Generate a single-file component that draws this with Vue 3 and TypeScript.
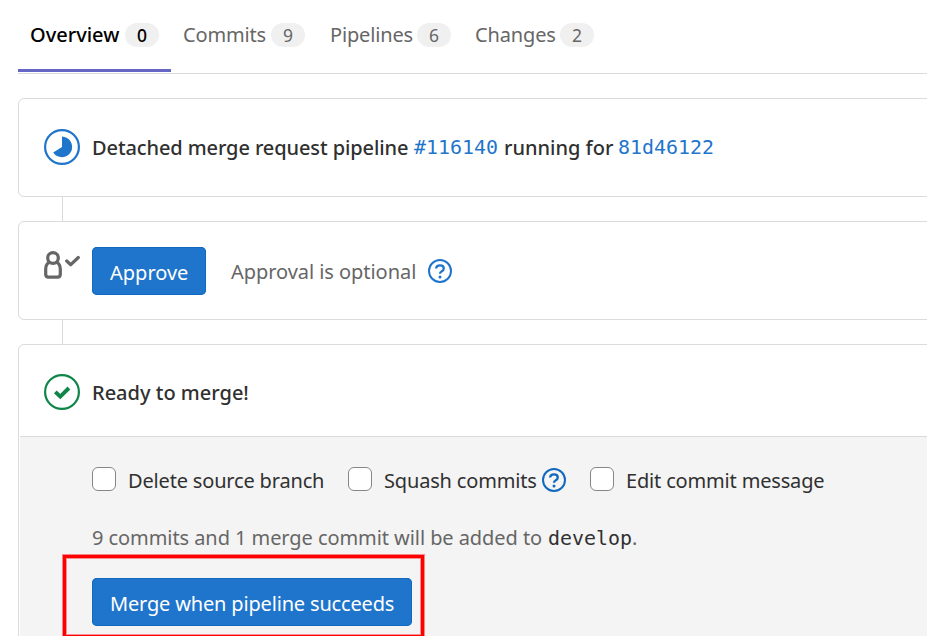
<script setup lang="ts">
interface Tab {
  key: string
  label: string
  count: number
}

interface MergeOption {
  key: string
  label: string
  help?: boolean
}

const tabs: Tab[] = [
  { key: 'overview', label: 'Overview', count: 0 },
  { key: 'commits', label: 'Commits', count: 9 },
  { key: 'pipelines', label: 'Pipelines', count: 6 },
  { key: 'changes', label: 'Changes', count: 2 },
]

const options: MergeOption[] = [
  { key: 'delete', label: 'Delete source branch' },
  { key: 'squash', label: 'Squash commits', help: true },
  { key: 'edit', label: 'Edit commit message' },
]
</script>

<template>
  <main class="page">
    <nav class="tabs">
      <a v-for="tab in tabs" :key="tab.key" class="tab" :class="[tab.key, { active: tab.key === 'overview' }]">
        <span class="tab-label">{{ tab.label }}</span>
        <span class="badge">{{ tab.count }}</span>
      </a>
    </nav>

    <section class="card row">
      <svg class="status running" viewBox="0 0 36 36">
        <circle cx="18" cy="18" r="16.9" fill="none" stroke="#1f75cb" stroke-width="2.2" />
        <path d="M18 7.6A10.3 10.3 0 1 1 9.2 23.5L18 18Z" fill="#1f75cb" />
      </svg>
      <p class="title">
        <span class="t-pipeline">Detached merge request pipeline</span>
        <a class="mono link first">#116140</a>
        <span class="t-running">running for</span>
        <a class="mono link">81d46122</a>
      </p>
    </section>
    <div class="connector"></div>

    <section class="card row">
      <svg class="status approval" viewBox="0 0 36 36" fill="none" stroke="#666" stroke-width="3.2" stroke-linejoin="round">
        <circle cx="9" cy="10" r="5.3" />
        <path d="M5.3 14.4C3 15.6 1.7 18 1.7 21V26.2Q1.7 29.2 4.7 29.2H13.3Q16.3 29.2 16.3 26.2V21C16.3 18 15 15.6 12.7 14.4" />
        <path d="M22.7 13L26.8 16.7L34.3 9.5" stroke-linecap="round" />
      </svg>
      <button class="btn approve"><span>Approve</span></button>
      <span class="optional">Approval is optional</span>
      <svg class="help" viewBox="0 0 24 24" fill="none" stroke="#1f75cb">
        <circle cx="12" cy="12" r="11" stroke-width="2" />
        <path d="M8.1 9.5C8.3 7.4 10 6.4 12 6.4C14.3 6.4 15.8 7.6 15.8 9.5C15.8 11.2 14.6 11.9 13.5 12.5C12.4 13.1 12 13.4 12 14.7" stroke-width="2.3" />
        <circle cx="12" cy="17.9" r="1.5" fill="#1f75cb" stroke="none" />
      </svg>
    </section>
    <div class="connector"></div>

    <section class="card merge">
      <div class="row ready">
        <svg class="status" viewBox="0 0 36 36" fill="none" stroke="#108548">
          <circle cx="18" cy="18" r="16.9" stroke-width="2.2" />
          <path d="M11.3 17.8L16.3 22.6L24.9 14" stroke-width="3.9" />
        </svg>
        <p class="title"><span class="t-ready">Ready to merge!</span></p>
      </div>
      <div class="panel">
        <div class="options">
          <label v-for="option in options" :key="option.key" class="option" :class="option.key">
            <input type="checkbox" class="box" />
            <span class="option-label">{{ option.label }}</span>
            <svg v-if="option.help" class="help" viewBox="0 0 24 24" fill="none" stroke="#1068bf">
              <circle cx="12" cy="12" r="11" stroke-width="2" />
              <path d="M8.1 9.5C8.3 7.4 10 6.4 12 6.4C14.3 6.4 15.8 7.6 15.8 9.5C15.8 11.2 14.6 11.9 13.5 12.5C12.4 13.1 12 13.4 12 14.7" stroke-width="2.3" />
              <circle cx="12" cy="17.9" r="1.5" fill="#1068bf" stroke="none" />
            </svg>
          </label>
        </div>
        <p class="summary">
          <span class="t-summary">9 commits and 1 merge commit will be added to</span>
          <span class="mono branch">develop</span><span>.</span>
        </p>
        <div class="action">
          <button class="btn submit"><span>Merge when pipeline succeeds</span></button>
          <div class="highlight"></div>
        </div>
      </div>
    </section>
  </main>
</template>

<style>
body {
  margin: 0;
  background: #fff;
  overflow: hidden;
}
</style>

<style scoped>
.page {
  box-sizing: border-box;
  width: 927px;
  height: 636px;
  padding-left: 18px;
  overflow: hidden;
  font-family: "Noto Sans", "Open Sans", sans-serif;
  font-size: 20px;
  line-height: 28px;
  color: #303030;
  white-space: nowrap;
}
p {
  margin: 0;
}
.tabs {
  display: flex;
  box-sizing: border-box;
  height: 74px;
  border-bottom: 1px solid #dbdbdb;
  margin-bottom: 24px;
}
.tab {
  display: flex;
  justify-content: space-between;
  box-sizing: border-box;
  height: 72px;
  width: 146px;
  padding: 21px 12px 0;
  color: #666;
}
.tab-label {
  letter-spacing: -0.15px;
}
.tab.overview {
  width: 153px;
}
.tab.overview .tab-label {
  letter-spacing: 0;
}
.tab.pipelines {
  padding-left: 13px;
}
.tab.changes {
  width: 143px;
}
.tab.active {
  color: #000;
  font-weight: 500;
  border-bottom: 3px solid #6666c4;
}
.badge {
  width: 34px;
  height: 24px;
  margin-top: 2px;
  border-radius: 12px;
  background: #f0f0f0;
  font-size: 17.5px;
  line-height: 24px;
  text-align: center;
}
.card {
  box-sizing: border-box;
  width: 940px;
  height: 99px;
  border: 1px solid #dbdbdb;
  border-radius: 6px;
}
.row {
  display: flex;
  align-items: center;
  padding-left: 25px;
}
.connector {
  height: 24px;
  margin-left: 44px;
  border-left: 1px solid #dbdbdb;
}
.status {
  flex: none;
  width: 36px;
  height: 36px;
  margin-right: 12px;
}
.running {
  margin-top: -1px;
}
.approval {
  margin-top: -9px;
}
.title {
  display: flex;
  align-items: center;
  font-weight: 500;
}
.t-pipeline {
  width: 322px;
  letter-spacing: -0.1px;
}
.t-running {
  width: 114px;
}
.mono {
  font-family: "DejaVu Sans Mono", monospace;
  font-size: 19.93px;
  font-weight: 400;
}
.link {
  color: #1f75cb;
}
.first {
  width: 90px;
}
.btn {
  box-sizing: border-box;
  height: 48px;
  padding: 4px 0 0 18px;
  border: 0;
  border-radius: 5px;
  background: #1f75cb;
  box-shadow: inset 0 0 0 1px #1068bf;
  color: #fff;
  font: inherit;
  text-align: left;
}
.approve {
  width: 114px;
  margin-right: 25px;
}
.optional {
  width: 197px;
  padding-top: 2px;
  color: #666;
  letter-spacing: -0.05px;
}
.help {
  flex: none;
  width: 24px;
  height: 24px;
}
.merge {
  height: 320px;
}
.ready {
  height: 91px;
  padding-top: 3px;
  box-sizing: border-box;
}
.t-ready {
  padding-top: 2px;
}
.panel {
  margin-left: 1px;
  height: 226px;
  padding: 29px 0 0 72px;
  border-top: 1px solid #dbdbdb;
  background: #f4f4f4;
}
.options {
  display: flex;
  height: 28px;
}
.option {
  display: flex;
  align-items: center;
  height: 28px;
}
.option-label {
  padding-top: 2px;
  letter-spacing: -0.17px;
}
.delete {
  width: 256px;
}
.squash {
  width: 242px;
}
.squash .option-label {
  width: 158px;
}
.box {
  appearance: none;
  box-sizing: border-box;
  width: 24px;
  height: 24px;
  margin: -2px 12px 0 0;
  border: 1px solid #868686;
  border-radius: 6px;
  background: #fff;
}
.summary {
  display: flex;
  height: 28px;
  margin-top: 30px;
  color: #666;
}
.t-summary {
  width: 456px;
  letter-spacing: -0.07px;
}
.branch {
  width: 84px;
  padding-top: 1px;
  color: #303030;
}
.action {
  position: relative;
  margin-top: 26px;
}
.submit {
  display: block;
  width: 320px;
  letter-spacing: -0.17px;
}
.highlight {
  position: absolute;
  top: -23px;
  left: -29px;
  box-sizing: border-box;
  width: 361px;
  height: 83px;
  border: 3px solid #f00;
  box-shadow: 0 0 0 1px rgba(255, 0, 0, 0.45), inset 0 0 0 1px rgba(255, 0, 0, 0.4);
  pointer-events: none;
}
</style>
